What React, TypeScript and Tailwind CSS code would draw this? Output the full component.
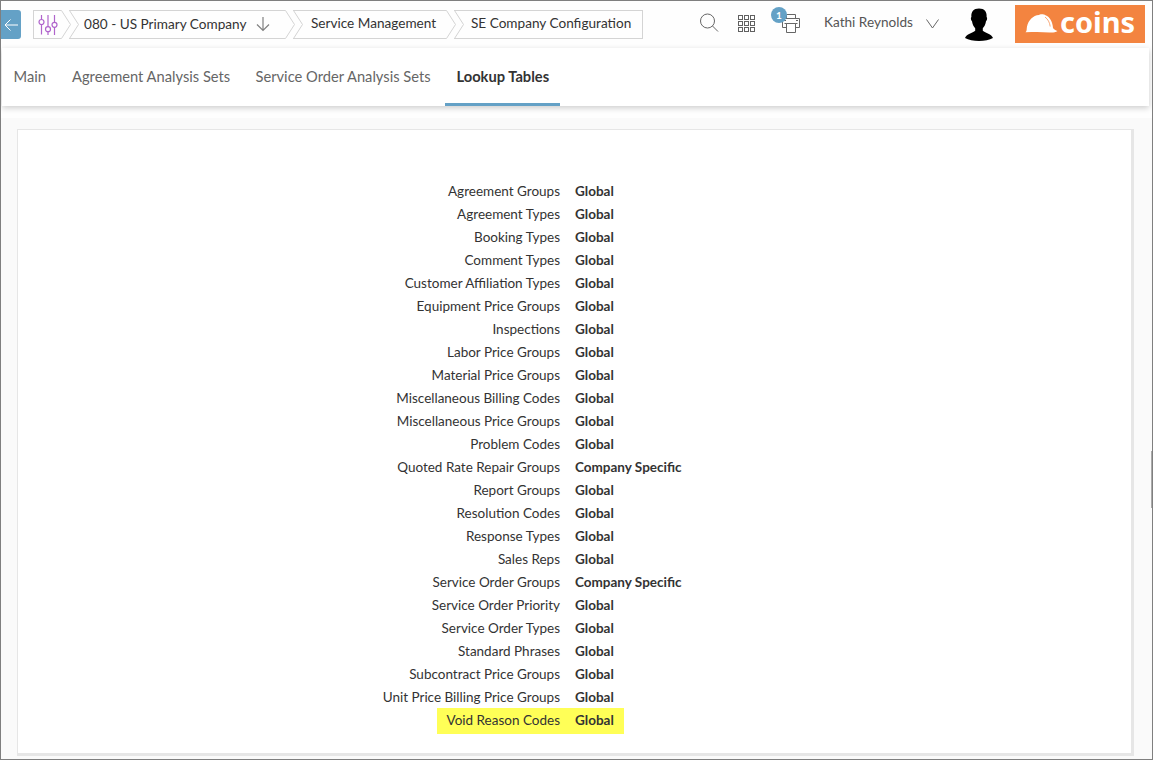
import React from "react";

const rows: [string, string][] = [
  ["Agreement Groups", "Global"],
  ["Agreement Types", "Global"],
  ["Booking Types", "Global"],
  ["Comment Types", "Global"],
  ["Customer Affiliation Types", "Global"],
  ["Equipment Price Groups", "Global"],
  ["Inspections", "Global"],
  ["Labor Price Groups", "Global"],
  ["Material Price Groups", "Global"],
  ["Miscellaneous Billing Codes", "Global"],
  ["Miscellaneous Price Groups", "Global"],
  ["Problem Codes", "Global"],
  ["Quoted Rate Repair Groups", "Company Specific"],
  ["Report Groups", "Global"],
  ["Resolution Codes", "Global"],
  ["Response Types", "Global"],
  ["Sales Reps", "Global"],
  ["Service Order Groups", "Company Specific"],
  ["Service Order Priority", "Global"],
  ["Service Order Types", "Global"],
  ["Standard Phrases", "Global"],
  ["Subcontract Price Groups", "Global"],
  ["Unit Price Billing Price Groups", "Global"],
  ["Void Reason Codes", "Global"],
];

function Separator() {
  return (
    <svg className="h-[29px] w-[19px] shrink-0" viewBox="0 0 19 29" fill="none" stroke="#d4d4d4">
      <path d="M0 .5h.5l9 14-9 14H0" />
      <path d="M8.500 .5l9 14-9 14" />
    </svg>
  );
}

function Breadcrumb() {
  return (
    <nav className="ml-3 flex h-[29px] w-[610px] text-[13.6px] text-[#333]">
      <div className="flex w-[28px] items-center border-y border-l border-[#d4d4d4] pl-1">
        <svg className="h-[22px] w-5" viewBox="0 0 20 22" fill="none" stroke="#b064cc" strokeWidth="1.2">
          <path d="M3.500 1v4.500M3.500 10.500v10M10 1v11.500M10 18v3M16.500 1v7M16.500 13v8" />
          <circle cx="3.500" cy="8" r="2.500" />
          <circle cx="10" cy="15.200" r="2.500" />
          <circle cx="16.500" cy="10.800" r="2.500" />
        </svg>
      </div>
      <Separator />
      <div className="-ml-[11px] flex w-[216px] items-center border-y border-[#d4d4d4] pb-px pl-[15px]">
        <span className="w-[162px] whitespace-nowrap">080 - US Primary Company</span>
        <svg className="ml-[9px] h-4 w-4 shrink-0" viewBox="0 0 16 16" fill="none" stroke="#808080" strokeWidth="1.2">
          <path d="M8 1v13.500M2 8.500 8 14.500 14 8.500" />
        </svg>
      </div>
      <Separator />
      <div className="-ml-[11px] flex w-[153px] items-center border-y border-[#d4d4d4] pb-[3px] pl-[18px]">
        <span className="whitespace-nowrap">Service Management</span>
      </div>
      <Separator />
      <div className="-ml-[11px] flex flex-1 items-center border-y border-r border-[#d4d4d4] pb-[3px] pl-[17px]">
        <span className="whitespace-nowrap">SE Company Configuration</span>
      </div>
    </nav>
  );
}

function PrinterIcon() {
  return (
    <svg className="h-5 w-5" viewBox="0 0 20 20" fill="none" stroke="#666">
      <path d="M5.500 5V1.500h9V5M5.500 14.500h-4v-9h17v9h-4" />
      <path d="M3 7.500h2M15 7.500h2M3.500 10.500h13" />
      <path d="M5.500 10.500h9v9h-9z" fill="#fff" />
    </svg>
  );
}

export default function App() {
  return (
    <div className="flex h-[760px] w-[1153px] flex-col overflow-hidden border border-[#7f7f7f] bg-[#fafafa] font-['Lato',sans-serif]">
      <header className="flex h-[47px] shrink-0 items-start bg-[#fefefe]">
        <div className="mt-[9px] flex h-[29px] w-5 items-center justify-center rounded-r-[3px] bg-[#64a1c6]">
          <svg className="h-3 w-[14px]" viewBox="0 0 14 12" fill="none" stroke="#fff">
            <path d="M14 6H1M6.500.500 1 6l5.500 5.500" />
          </svg>
        </div>
        <div className="mt-[9px]">
          <Breadcrumb />
        </div>
        <svg className="ml-[57px] mt-3 h-[19px] w-[19px] shrink-0" viewBox="0 0 19 19" fill="none" stroke="#666">
          <circle cx="7.500" cy="8" r="7" />
          <path d="m12.500 13 5.500 5.500" />
        </svg>
        <svg className="ml-[19px] mt-[14px] h-[17px] w-[17px] shrink-0" viewBox="0 0 17 17" fill="none" stroke="#606060">
          {[0.5, 6.5, 12.5].map((y) =>
            [0.5, 6.5, 12.5].map((x) => <rect key={`${x}-${y}`} x={x} y={y} width="4" height="4" />),
          )}
        </svg>
        <div className="relative ml-[26px] mt-[12px] shrink-0">
          <PrinterIcon />
          <span className="absolute -left-[10px] -top-[6px] flex h-4 w-4 items-center justify-center rounded-full bg-[#64a1c6] text-[10px] font-bold leading-none text-white">
            1
          </span>
        </div>
        <span className="ml-[23px] mt-[11px] w-[89px] shrink-0 whitespace-nowrap text-[13.6px] leading-5 text-[#555]">
          Kathi Reynolds
        </span>
        <svg className="ml-[13px] mt-[18px] h-[10px] w-[13px] shrink-0" viewBox="0 0 13 10" fill="none" stroke="#666">
          <path d="m.5.500 6 8.500 6-8.500" />
        </svg>
        <svg className="ml-[25px] mt-[7px] h-[33px] w-[30px] shrink-0" viewBox="0 0 30 33">
          <path d="M15 .5c5.500 0 8 3.200 7.600 8.500.9.700.6 3-.6 4.200-.4 3-1.500 5.300-3.200 7v2.500c2.500 2.400 9 3.200 10.200 7.300C25.500 32 20.500 33 15 33S4.500 32 1 30c1.200-4.100 7.700-4.900 10.200-7.300v-2.500c-1.700-1.700-2.800-4-3.200-7-1.200-1.200-1.500-3.500-.6-4.200C7 3.700 9.500.500 15 .5Z" />
        </svg>
        <div className="ml-[21px] mt-1 flex h-[38px] w-[130px] shrink-0 items-start bg-[#f38440] pl-[10px] text-white">
          <svg className="mt-[9px] h-[19px] w-[33px] shrink-0" viewBox="0 0 33 19" fill="none">
            <path
              fill="currentColor"
              d="M.5 18.200C2 17.500 1.500 15 2 12.500 3.500 6 8 1.500 14 1c.5-.8 5-1 6.500.3C25 3 27.500 8 28 14c1 1.800 2.500 2.200 4.500 3-2 1.500-5 1.700-8 1.500-8-.8-16-.6-24-.3Z"
            />
            <path d="M20 3c3 2.200 4.700 5.500 5.200 9.500" stroke="#f38440" strokeWidth=".7" />
          </svg>
          <span className="ml-[2px] font-['Noto_Sans',sans-serif] text-[29px] font-bold leading-[34px]">coins</span>
        </div>
      </header>
      <div className="shrink-0 bg-[#fefefe] pb-3">
        <nav className="ml-px mr-[3px] flex h-[58px] bg-white text-[14.7px] text-[#666] shadow-[0_2px_6px_rgba(0,0,0,0.2)]">
          <span className="w-[58px] whitespace-nowrap pl-[11.5px] pt-[18px] leading-5">Main</span>
          <span className="w-[183px] whitespace-nowrap pl-[12px] pt-[18px] leading-5">Agreement Analysis Sets</span>
          <span className="w-[202px] whitespace-nowrap pl-[12.5px] pt-[18px] leading-5">Service Order Analysis Sets</span>
          <span className="w-[115px] whitespace-nowrap border-b-3 border-[#64a1c6] pl-[11.5px] pt-[18px] font-bold leading-5 text-[#333]">
            Lookup Tables
          </span>
        </nav>
      </div>
      <div className="flex flex-1">
        <main className="ml-4 mt-[11px] h-[627px] w-[1117px] border-b-3 border-l border-r-3 border-t border-[#e6e6e6] bg-white pt-[50px]">
          {rows.map(([label, value], i) => (
            <div key={label} className="relative flex h-[23px] items-start text-[13.5px] leading-[23px] text-[#333]">
              {i === rows.length - 1 && (
                <div className="absolute left-[419px] top-[-1px] h-[26px] w-[187px] bg-[#ffff57]" />
              )}
              <span className="relative w-[542px] whitespace-nowrap text-right">{label}</span>
              <span className="relative ml-[15px] whitespace-nowrap font-bold">{value}</span>
            </div>
          ))}
        </main>
        <div className="ml-auto mt-[333px] h-[57px] w-px bg-[#aaa]" />
      </div>
    </div>
  );
}
